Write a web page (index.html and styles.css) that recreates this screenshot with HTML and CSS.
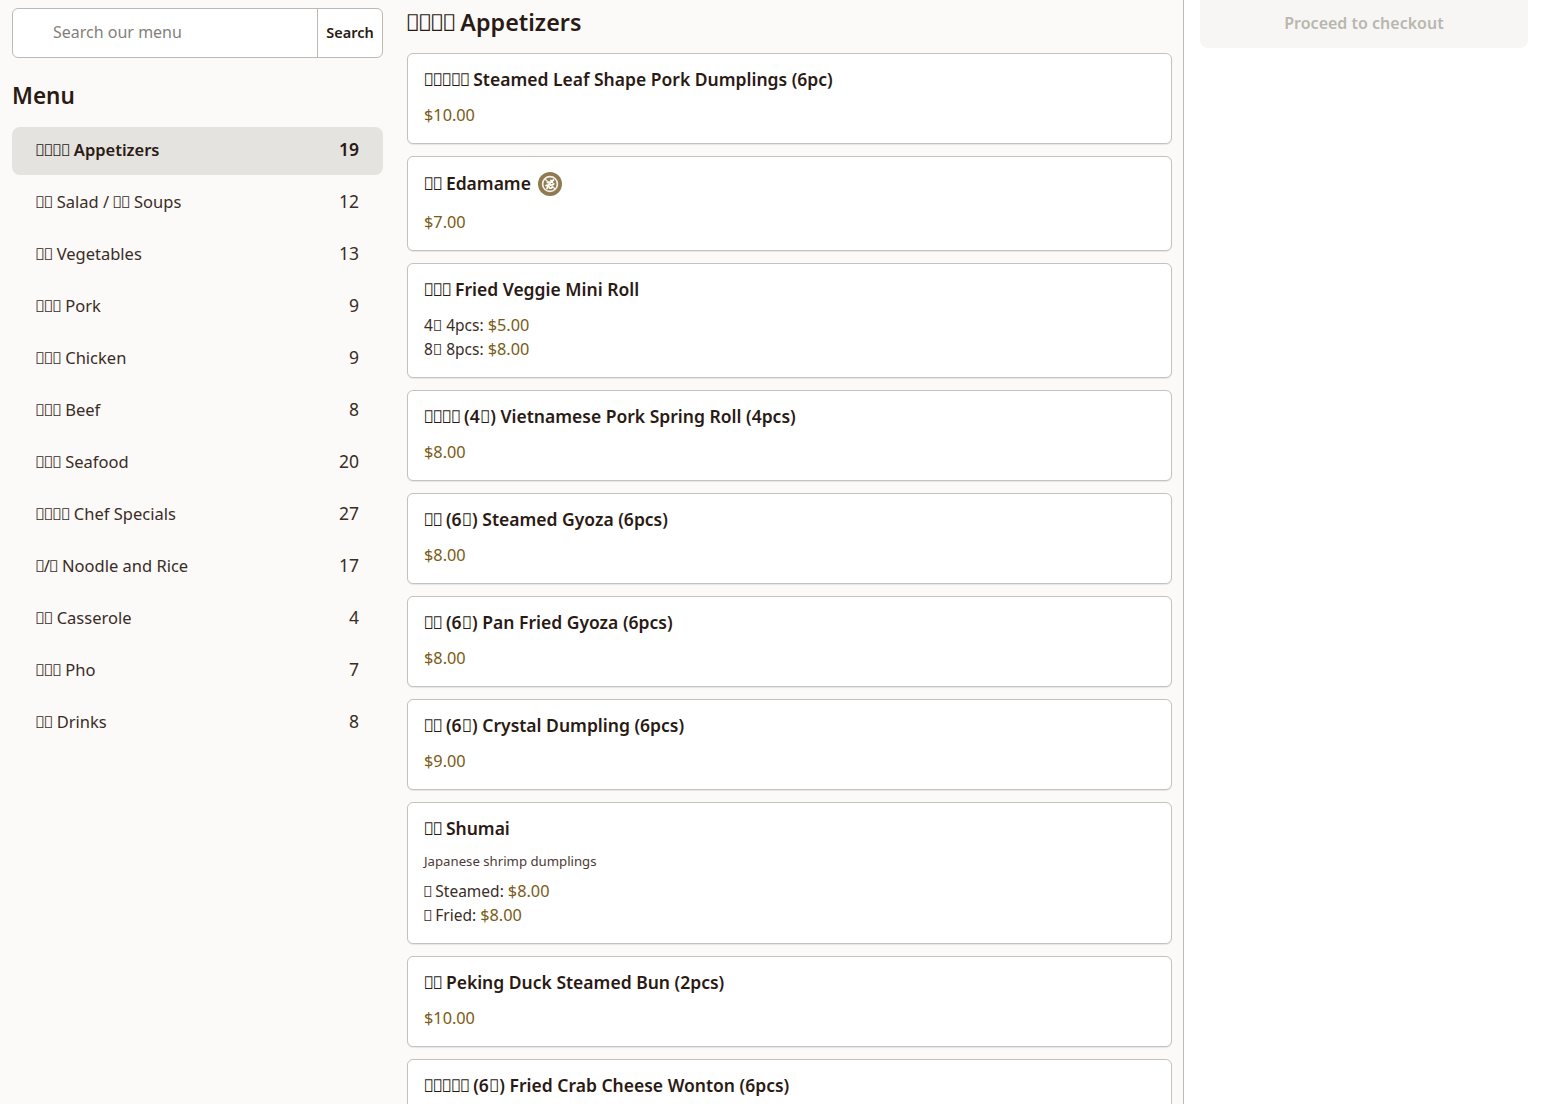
FILE: index.html
```html
<!DOCTYPE html>
<html lang="en">
<head>
<meta charset="utf-8">
<title>Menu</title>
<link rel="stylesheet" href="styles.css">
</head>
<body>
<div class="page">
  <aside class="sidebar">
    <form class="search">
      <input class="search-input" placeholder="Search our menu">
      <button class="search-btn" type="button">Search</button>
    </form>
    <h2 class="side-title">Menu</h2>
    <ul class="cats">
      <li class="cat active"><span><span class="z">&#xE000;&#xE000;&#xE000;&#xE000;</span> Appetizers</span><span class="count">19</span></li>
      <li class="cat"><span><span class="z">&#xE000;&#xE000;</span> Salad / <span class="z">&#xE000;&#xE000;</span> Soups</span><span class="count">12</span></li>
      <li class="cat"><span><span class="z">&#xE000;&#xE000;</span> Vegetables</span><span class="count">13</span></li>
      <li class="cat"><span><span class="z">&#xE000;&#xE000;&#xE000;</span> Pork</span><span class="count">9</span></li>
      <li class="cat"><span><span class="z">&#xE000;&#xE000;&#xE000;</span> Chicken</span><span class="count">9</span></li>
      <li class="cat"><span><span class="z">&#xE000;&#xE000;&#xE000;</span> Beef</span><span class="count">8</span></li>
      <li class="cat"><span><span class="z">&#xE000;&#xE000;&#xE000;</span> Seafood</span><span class="count">20</span></li>
      <li class="cat"><span><span class="z">&#xE000;&#xE000;&#xE000;&#xE000;</span> Chef Specials</span><span class="count">27</span></li>
      <li class="cat"><span><span class="z">&#xE000;</span>/<span class="z">&#xE000;</span> Noodle and Rice</span><span class="count">17</span></li>
      <li class="cat"><span><span class="z">&#xE000;&#xE000;</span> Casserole</span><span class="count">4</span></li>
      <li class="cat"><span><span class="z">&#xE000;&#xE000;&#xE000;</span> Pho</span><span class="count">7</span></li>
      <li class="cat"><span><span class="z">&#xE000;&#xE000;</span> Drinks</span><span class="count">8</span></li>
    </ul>
  </aside>
  <main class="main">
    <h1 class="section-title"><span class="z">&#xE000;&#xE000;&#xE000;&#xE000;</span> Appetizers</h1>
    <article class="card">
      <h3 class="item-title"><span class="z">&#xE000;&#xE000;&#xE000;&#xE000;&#xE000;</span> Steamed Leaf Shape Pork Dumplings (6pc)</h3>
      <div class="line price">$10.00</div>
    </article>
    <article class="card">
      <h3 class="item-title has-icon"><span class="icon-label"><span class="z">&#xE000;&#xE000;</span> Edamame</span>
        <svg class="diet" viewBox="0 0 24 24" aria-hidden="true">
          <circle cx="12" cy="12" r="12" fill="#8f7b52"/>
          <circle cx="12" cy="12" r="7.400" fill="none" stroke="#f4f0e8" stroke-width="1.700"/>
          <path d="M9 16.500c1-3.500 3-6 6.500-8.500M9.500 10.500c1.200-.6 2-.4 2.500.8M8 13.500c1.300-.5 2.500-.2 3 1M13 8.500c.2 1 .6 1.700 1.500 2M12.500 13c1 .2 2.500 0 3.300-1M11.500 16c1 .3 2.200.1 3-.8" fill="none" stroke="#fff" stroke-width="1.800" stroke-linecap="round"/>
          <path d="M7 7l10 10" stroke="#f4f0e8" stroke-width="1.300"/>
        </svg>
      </h3>
      <div class="line price">$7.00</div>
    </article>
    <article class="card">
      <h3 class="item-title"><span class="z">&#xE000;&#xE000;&#xE000;</span> Fried Veggie Mini Roll</h3>
      <div class="line">4<span class="n">&#xE000;</span> 4pcs: <span class="price">$5.00</span></div>
      <div class="line">8<span class="n">&#xE000;</span> 8pcs: <span class="price">$8.00</span></div>
    </article>
    <article class="card">
      <h3 class="item-title"><span class="z">&#xE000;&#xE000;&#xE000;&#xE000;</span> (4<span class="n">&#xE000;</span>) Vietnamese Pork Spring Roll (4pcs)</h3>
      <div class="line price">$8.00</div>
    </article>
    <article class="card">
      <h3 class="item-title"><span class="z">&#xE000;&#xE000;</span> (6<span class="n">&#xE000;</span>) Steamed Gyoza (6pcs)</h3>
      <div class="line price">$8.00</div>
    </article>
    <article class="card">
      <h3 class="item-title"><span class="z">&#xE000;&#xE000;</span> (6<span class="n">&#xE000;</span>) Pan Fried Gyoza (6pcs)</h3>
      <div class="line price">$8.00</div>
    </article>
    <article class="card">
      <h3 class="item-title"><span class="z">&#xE000;&#xE000;</span> (6<span class="n">&#xE000;</span>) Crystal Dumpling (6pcs)</h3>
      <div class="line price">$9.00</div>
    </article>
    <article class="card">
      <h3 class="item-title"><span class="z">&#xE000;&#xE000;</span> Shumai</h3>
      <p class="desc">Japanese shrimp dumplings</p>
      <div class="line"><span class="z">&#xE000;</span> Steamed: <span class="price">$8.00</span></div>
      <div class="line"><span class="z">&#xE000;</span> Fried: <span class="price">$8.00</span></div>
    </article>
    <article class="card">
      <h3 class="item-title"><span class="z">&#xE000;&#xE000;</span> Peking Duck Steamed Bun (2pcs)</h3>
      <div class="line price">$10.00</div>
    </article>
    <article class="card">
      <h3 class="item-title"><span class="z">&#xE000;&#xE000;&#xE000;&#xE000;&#xE000;</span> (6<span class="n">&#xE000;</span>) Fried Crab Cheese Wonton (6pcs)</h3>
    </article>
  </main>
  <aside class="cart">
    <button class="checkout" type="button" disabled>Proceed to checkout</button>
  </aside>
</div>
</body>
</html>
```
FILE: styles.css
```css
* { box-sizing: border-box; }
html, body { margin: 0; height: 100%; overflow: hidden; }
body {
  background: #fbfaf8;
  color: #2a1a14;
  font-family: "Noto Sans", "Open Sans", sans-serif;
  font-size: 16px;
}
.z { letter-spacing: -.08em; margin-left: -.05em; font-weight: 400; }
.n { font-weight: 400; }
.page {
  display: grid;
  grid-template-columns: 395px 789px 1fr;
  height: 1104px;
  overflow: hidden;
}
.sidebar { padding: 8px 12px 0; }
.search {
  display: flex;
  height: 50px;
  background: #fff;
  border: 1px solid #bdb9b4;
  border-radius: 6px;
  overflow: hidden;
}
.search-input {
  flex: 1;
  min-width: 0;
  border: 0;
  outline: 0;
  padding: 0 0 3px 40px;
  background: transparent;
  font: inherit;
  font-size: 16px;
  color: #2a1a14;
}
.search-input::placeholder { color: #837f7b; opacity: 1; }
.search-btn {
  width: 65px;
  border: 0;
  border-left: 1px solid #bdb9b4;
  background: transparent;
  padding: 0 0 2px;
  font: inherit;
  font-size: 14.500px;
  font-weight: 600;
  color: #2a1a14;
}
.side-title {
  margin: 24px 0 17px;
  font-size: 22.500px;
  line-height: 28px;
  font-weight: 600;
}
.cats { list-style: none; margin: 0; padding: 0; display: flex; flex-direction: column; gap: 4px; }
.cat {
  display: flex;
  justify-content: space-between;
  align-items: center;
  height: 48px;
  padding: 0 24px 4px;
  border-radius: 8px;
  font-size: 16.500px;
  color: #3a2c26;
}
.cat.active { background: #e5e3df; font-weight: 600; color: #2a1a14; }
.count { font-size: 17.500px; }
.main { padding: 0 11px 0 12px; border-right: 1px solid #bdb9b4; }
.section-title {
  margin: 8px 0 17px;
  height: 28px;
  font-size: 23.300px;
  line-height: 28px;
  font-weight: 600;
}
.card {
  background: #fff;
  border: 1px solid #c5c2bd;
  border-radius: 6px;
  box-shadow: 0 1px 1px rgba(0,0,0,.08);
  padding: 16px;
  margin-bottom: 12px;
}
.item-title {
  margin: 0 0 12px;
  padding-bottom: 2px;
  font-size: 17.500px;
  line-height: 19px;
  font-weight: 600;
}
.has-icon { display: flex; align-items: flex-start; gap: 7px; height: 25px; padding: 0; }
.icon-label { padding-top: 1px; }
.diet { width: 24px; height: 24px; flex: none; margin-top: -1px; }
.line { line-height: 24px; font-size: 15.500px; color: #3a2c26; }
.price { color: #7a5a14; font-size: 16.300px; }
.desc { margin: 0 0 8px; font-size: 13.200px; line-height: 19px; color: #4b3a33; }
.cart { padding: 0 16px; background: #fff; }
.checkout {
  display: block;
  width: 100%;
  height: 48px;
  border: 0;
  border-radius: 0 0 8px 8px;
  background: #f7f6f4;
  color: #b9b6b0;
  font: inherit;
  font-size: 16px;
  font-weight: 600;
  padding: 0 0 2px;
}
```
